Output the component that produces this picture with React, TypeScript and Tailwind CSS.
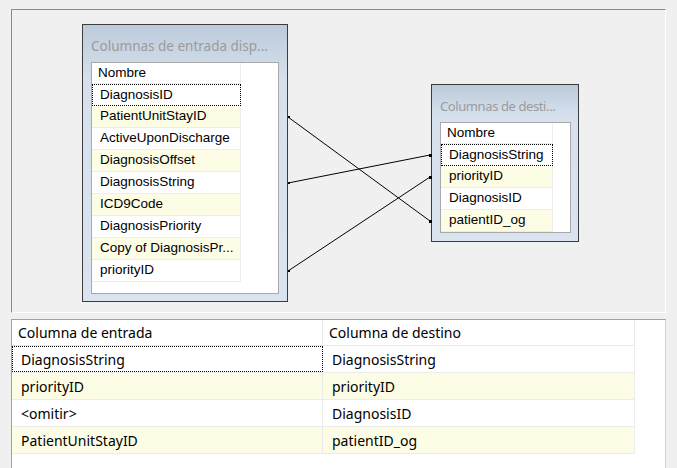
import React from 'react';

const entrada = [
  'DiagnosisID',
  'PatientUnitStayID',
  'ActiveUponDischarge',
  'DiagnosisOffset',
  'DiagnosisString',
  'ICD9Code',
  'DiagnosisPriority',
  'Copy of DiagnosisPr...',
  'priorityID',
];

const destino = ['DiagnosisString', 'priorityID', 'DiagnosisID', 'patientID_og'];

const mapeos = [
  ['DiagnosisString', 'DiagnosisString'],
  ['priorityID', 'priorityID'],
  ['<omitir>', 'DiagnosisID'],
  ['PatientUnitStayID', 'patientID_og'],
];

function Fila({ texto, i, ancho }: { texto: string; i: number; ancho: string }) {
  const amarillo = i % 2 === 1;
  const foco = i === 0;
  return (
    <div
      className={`${ancho} h-[22px] flex items-center whitespace-nowrap overflow-hidden ${
        amarillo ? 'bg-[#fdfde5]' : 'bg-white'
      } ${foco ? 'pl-[7px] border border-dotted border-black' : 'pl-[8px] border-b border-r border-[#ededed]'}`}
    >
      {texto}
    </div>
  );
}

function Tabla({
  titulo,
  filas,
  ancho,
  lista,
  tituloClase,
}: {
  titulo: string;
  filas: string[];
  ancho: string;
  lista: string;
  tituloClase: string;
}) {
  return (
    <div className="flex flex-col h-full border border-[#3c3c3c] bg-gradient-to-b from-[#bccada] via-[#d6e1ed] via-[20%] to-[#d9e4f0]">
      <div className={`h-[37px] pt-[11px] pl-[8px] leading-[20px] text-[#9b9b9b] whitespace-nowrap overflow-hidden font-['Noto_Sans',sans-serif] ${tituloClase}`}>
        {titulo}
      </div>
      <div className={`ml-[8px] ${lista} border border-[#a9a9a9] bg-white text-[13.5px] text-black font-['Liberation_Sans',Arial,sans-serif]`}>
        <div className={`${ancho} h-[21px] flex items-center pl-[6px] border-b border-r border-[#ededed]`}>Nombre</div>
        {filas.map((f, i) => (
          <Fila key={f} texto={f} i={i} ancho={ancho} />
        ))}
      </div>
    </div>
  );
}

export default function App() {
  return (
    <div className="w-[677px] h-[468px] overflow-hidden bg-[#f0f0f0] pt-[9px] pl-[11px]">
      {/* lienzo de asignación */}
      <div className="relative w-[655px] h-[304px] border-t border-l border-[#8a8a8a] border-r border-b border-r-white border-b-white">
        <div className="absolute left-[70px] top-[14px] w-[206px] h-[278px]">
          <Tabla
            titulo="Columnas de entrada disp..."
            filas={entrada}
            ancho="w-[149px]"
            lista="w-[188px] h-[232px]"
            tituloClase="text-[13.5px]"
          />
        </div>
        <div className="absolute left-[419px] top-[74px] w-[148px] h-[158px]">
          <Tabla
            titulo="Columnas de desti..."
            filas={destino}
            ancho="w-[112px]"
            lista="w-[131px] h-[111px]"
            tituloClase="text-[13px] tracking-[-0.4px]"
          />
        </div>
        <svg className="absolute left-0 top-0" width="653" height="302">
          <g stroke="#000" strokeWidth="1" fill="none">
            <line x1="276" y1="107" x2="418" y2="211" />
            <line x1="276" y1="173" x2="418" y2="145" />
            <line x1="276" y1="261" x2="418" y2="167" />
          </g>
          <g fill="#000">
            <rect x="276" y="106" width="2" height="2" />
            <rect x="276" y="172" width="2" height="2" />
            <rect x="276" y="260" width="2" height="2" />
            <rect x="417" y="210" width="3" height="3" />
            <rect x="417" y="144" width="3" height="3" />
            <rect x="417" y="166" width="3" height="3" />
          </g>
        </svg>
      </div>

      {/* tabla de asignaciones */}
      <div className="mt-[6px] w-[655px] h-[160px] border-t border-l border-r border-t-[#a0a0a0] border-l-[#a0a0a0] border-r-[#d0d0d0] bg-white text-[14px] text-black font-['Noto_Sans',sans-serif]">
        <div className="flex h-[26px] w-[623px] border-b border-r border-[#e8e8e8]">
          <div className="w-[311px] pl-[6px] flex items-center border-r border-[#e8e8e8]">Columna de entrada</div>
          <div className="flex-1 pl-[6px] flex items-center">Columna de destino</div>
        </div>
        {mapeos.map(([a, b], i) => (
          <div
            key={b}
            className={`flex h-[27px] w-[623px] border-b border-r border-[#ececec] ${i % 2 === 1 ? 'bg-[#fdfde5]' : 'bg-white'}`}
          >
            <div
              className={`w-[311px] flex items-center ${
                i === 0 ? 'pl-[8px] border border-dotted border-black' : 'pl-[9px] border-r border-[#ececec]'
              }`}
            >
              {a}
            </div>
            <div className="flex-1 pl-[9px] flex items-center">{b}</div>
          </div>
        ))}
      </div>
    </div>
  );
}
